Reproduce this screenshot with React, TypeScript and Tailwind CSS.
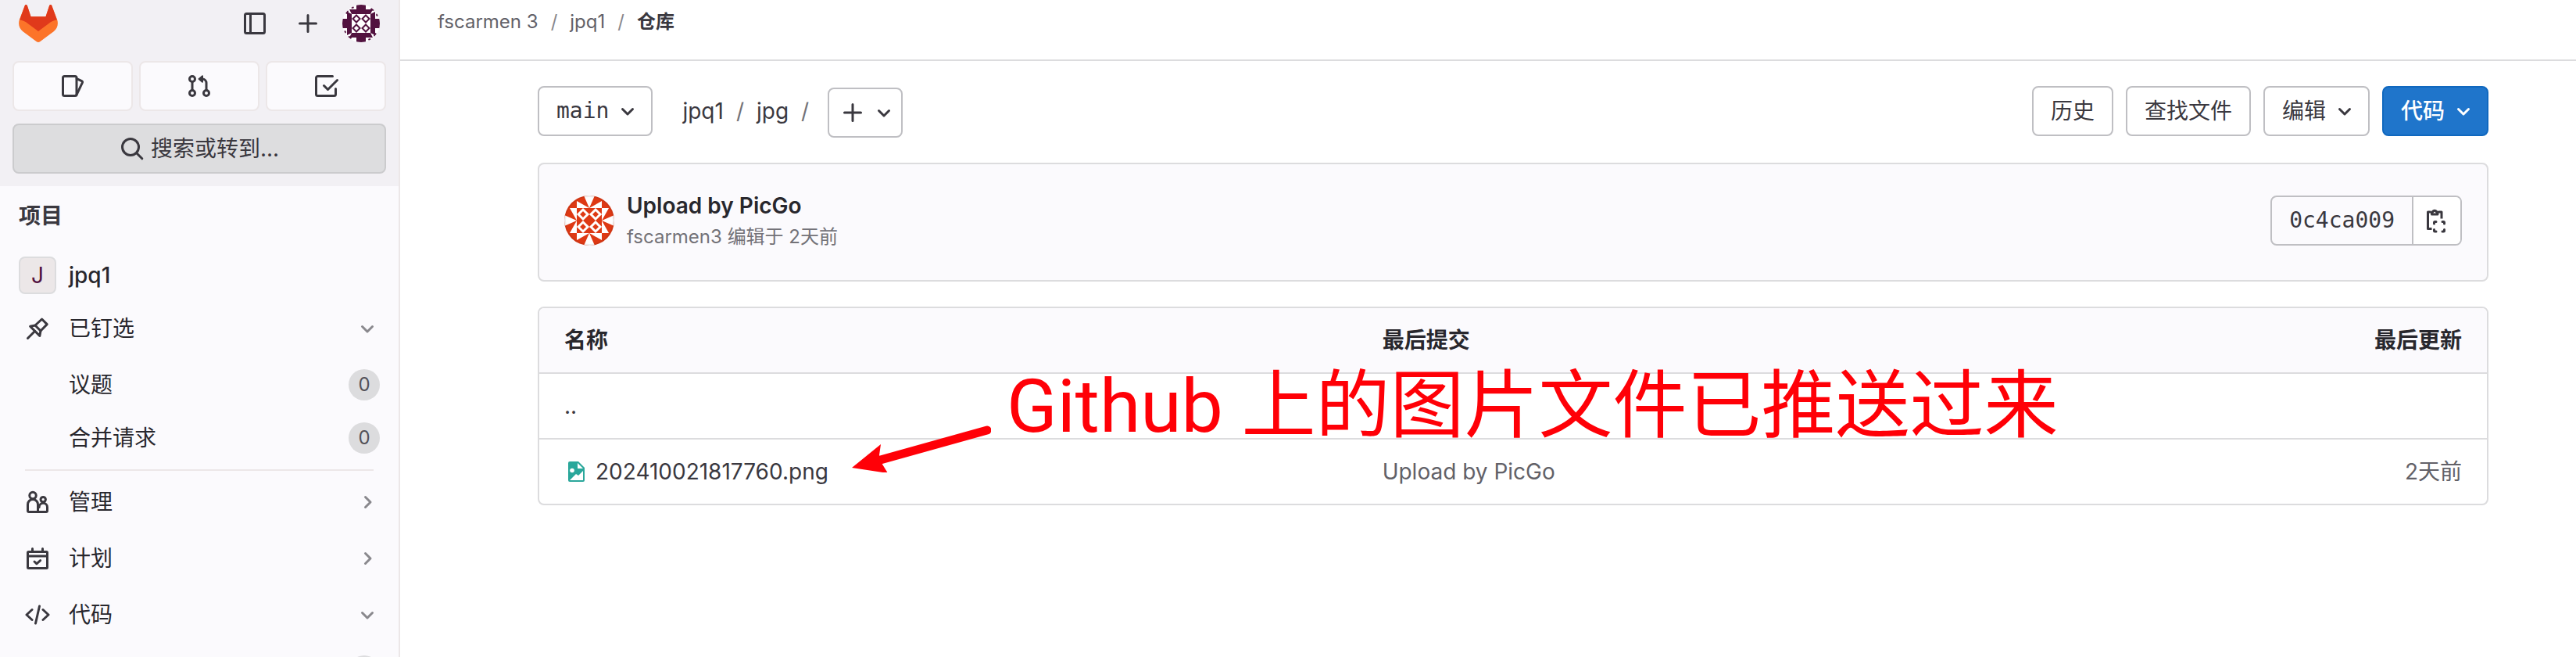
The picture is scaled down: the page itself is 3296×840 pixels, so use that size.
import type { ReactNode } from "react";

type IconProps = {
  children: ReactNode;
  className?: string;
};

const Icon = ({ children, className = "" }: IconProps) => (
  <svg
    viewBox="0 0 16 16"
    fill="none"
    stroke="currentColor"
    strokeWidth="1.5"
    strokeLinecap="round"
    strokeLinejoin="round"
    aria-hidden="true"
    className={`size-8 shrink-0 ${className}`}
  >
    {children}
  </svg>
);

const ChevronDown = ({ className = "" }: { className?: string }) => (
  <Icon className={className}>
    <path d="M4.75 6.75 8 10l3.25-3.25" />
  </Icon>
);

const ChevronRight = ({ className = "" }: { className?: string }) => (
  <Icon className={className}>
    <path d="M6.75 4.75 10 8l-3.25 3.25" />
  </Icon>
);

const PlusIcon = () => (
  <Icon>
    <path d="M8 2.75v10.5M2.75 8h10.5" />
  </Icon>
);

const Logo = () => (
  <svg viewBox="0 0 50 48" className="h-12 w-[50px]" aria-hidden="true">
    <path
      d="M49.1 19 42.2 1c-.4-1.3-2.5-1.3-3 0L34.5 15.3H15.5L10.8 1c-.5-1.3-2.6-1.3-3 0L.9 19C-1 24.5.5 30.5 5.3 34.2L22.8 47.2c1.3 1 3.1 1 4.4 0L44.7 34.2C49.5 30.5 51 24.5 49.1 19Z"
      fill="#fc7429"
    />
    <path
      d="M1.2 19.2 7.8 1c.4-1.3 2.5-1.3 3 0L15.5 15.3h19L39.2 1c.5-1.3 2.6-1.3 3 0l6.6 18.2c-3.8.8-7.3 2.4-10.3 4.7L25 34 11.5 23.9c-3-2.3-6.5-3.9-10.3-4.7Z"
      fill="#e0391b"
    />
  </svg>
);

const UserAvatar = () => (
  <svg viewBox="0 0 48 48" className="size-12" aria-hidden="true">
    <clipPath id="user-avatar">
      <circle cx="24" cy="24" r="24" />
    </clipPath>
    <g clipPath="url(#user-avatar)">
      <rect width="48" height="48" fill="#fff" />
      {[0, 90, 180, 270].map((angle) => (
        <g key={angle} transform={`rotate(${angle} 24 24)`} fill="#52123f">
          <path d="M18 0h12v6h9l-3 6H12L9 6h9Z" />
          <path d="m4 11 3-4 1 2-2 3ZM11 4l3-2 1 2-2 1Z" />
        </g>
      ))}
      <rect x="12" y="12" width="24" height="24" fill="#fff" />
      {[18, 30].map((cx) =>
        [18, 30].map((cy) => (
          <path
            key={`${cx}-${cy}`}
            d={`M${cx} ${cy - 4.5}l4.5 4.5-4.5 4.5-4.5-4.5Z`}
            fill="#fff"
            stroke="#52123f"
            strokeWidth="2"
          />
        ))
      )}
    </g>
  </svg>
);

const CommitAvatar = () => (
  <svg viewBox="0 0 64 64" className="size-16 shrink-0" aria-hidden="true">
    <clipPath id="commit-avatar">
      <circle cx="32" cy="32" r="32" />
    </clipPath>
    <g clipPath="url(#commit-avatar)">
      <rect width="64" height="64" fill="#de3914" />
      {[0, 90, 180, 270].map((angle) => (
        <g key={angle} transform={`rotate(${angle} 32 32)`} fill="#fff">
          <path d="M32 16 25 0h14Z" />
          <path d="M32 16H16V7Z" />
          <path d="M32 16h16V7Z" />
        </g>
      ))}
      <rect x="16" y="16" width="32" height="32" fill="#de3914" />
      {[24, 40].map((cx) =>
        [24, 40].map((cy) => (
          <path
            key={`${cx}-${cy}`}
            d={`M${cx} ${cy - 6}l6 6-6 6-6-6Z`}
            fill="#de3914"
            stroke="#fff"
            strokeWidth="3"
          />
        ))
      )}
      <circle cx="32" cy="32" r="31" fill="none" stroke="#1f1e24" strokeOpacity=".08" strokeWidth="2" />
    </g>
  </svg>
);

const ImageFileIcon = () => (
  <svg viewBox="0 0 32 32" className="size-8 shrink-0" aria-hidden="true">
    <path d="M7 3h11l8 8v16a2 2 0 0 1-2 2H7a2 2 0 0 1-2-2V5a2 2 0 0 1 2-2Z" fill="#2aa79b" />
    <path d="M17 5v7h7Z" fill="#fff" />
    <circle cx="10" cy="14.5" r="2.8" fill="#fff" />
    <path d="M7 27 15 19l3 2 6-6v12Z" fill="#fff" />
  </svg>
);

const shortcutClass =
  "flex h-16 items-center justify-center rounded-lg border-2 border-[#ece7e8] bg-[#fbfafd]";

const buttonClass =
  "flex h-16 items-center rounded-lg border-2 border-[#bfbfc3] bg-white text-[#3a383f]";

type MenuItemProps = {
  icon: ReactNode;
  label: string;
  open?: boolean;
};

const MenuItem = ({ icon, label, open = false }: MenuItemProps) => (
  <button type="button" className="flex h-[72px] w-full items-center pr-6 pl-8 text-left">
    <span className="text-[#3a383f]">{icon}</span>
    <span className="ml-6 flex-1">{label}</span>
    {open ? (
      <ChevronDown className="text-[#89888d]" />
    ) : (
      <ChevronRight className="text-[#89888d]" />
    )}
  </button>
);

const PinnedItem = ({ label, count }: { label?: string; count?: number }) => (
  <a href="#" className="flex h-[68px] items-center pr-6 pl-[88px]">
    <span className="flex-1">{label}</span>
    <span className="flex size-10 items-center justify-center rounded-full bg-[#dcdcde] text-2xl text-[#535158]">
      {count}
    </span>
  </a>
);

const Sidebar = () => (
  <aside className="w-[512px] shrink-0 border-r-2 border-[#ece7e8] bg-[#fbfafd] text-[#28272d]">
    <div className="bg-[#f2f0f4] px-4 pt-1.5 pb-4">
      <div className="flex items-center px-2 text-[#3a383f]">
        <a href="#" aria-label="GitLab">
          <Logo />
        </a>
        <button type="button" aria-label="Toggle sidebar" className="ml-auto">
          <Icon>
            <rect x="1.75" y="1.75" width="12.5" height="12.5" rx="1" />
            <path d="M5.25 2v12" />
          </Icon>
        </button>
        <button type="button" aria-label="New" className="mr-7 ml-9">
          <PlusIcon />
        </button>
        <button type="button" aria-label="User menu">
          <UserAvatar />
        </button>
      </div>

      <div className="mt-6 grid grid-cols-3 gap-2 text-[#3a383f]">
        <button type="button" aria-label="Issues" className={shortcutClass}>
          <Icon>
            <rect x="1.75" y="1.75" width="8.75" height="12.5" rx="1" />
            <path d="m10.6 3.3 3.2 1.5c.4.2.6.6.4 1l-3.8 8" />
          </Icon>
        </button>
        <button type="button" aria-label="Merge requests" className={shortcutClass}>
          <Icon>
            <circle cx="3.5" cy="3.5" r="1.75" />
            <circle cx="3.5" cy="12.5" r="1.75" />
            <circle cx="12.5" cy="12.5" r="1.75" />
            <path d="M3.5 5.25v5.5M12.5 10.75V6A2.5 2.5 0 0 0 10 3.5H9" />
            <path d="M7.8 3.5 10 1.6v3.8Z" fill="currentColor" strokeWidth="1" />
          </Icon>
        </button>
        <button type="button" aria-label="To-do list" className={shortcutClass}>
          <Icon>
            <path d="M12.25 1.75H2.75a1 1 0 0 0-1 1v10.5a1 1 0 0 0 1 1h10.5a1 1 0 0 0 1-1V9.75" />
            <path d="M6.75 7.75 9.25 10.25 15.25 4.25" />
          </Icon>
        </button>
      </div>

      <button
        type="button"
        className="mt-4 flex h-16 w-full items-center justify-center gap-2 rounded-lg border-2 border-[#cbcbcd] bg-[#dddddf] text-[#3a383f]"
      >
        <Icon>
          <circle cx="7" cy="7" r="5.25" />
          <path d="m11 11 3.4 3.4" />
        </Icon>
        搜索或转到...
      </button>
    </div>

    <h2 className="px-6 pt-5 leading-9 font-bold text-[#3a383f]">项目</h2>
    <a href="#" className="mt-7 flex h-[60px] items-center gap-4 px-6 font-medium">
      <span className="flex size-12 items-center justify-center rounded-lg border-2 border-[#dcdcde] bg-[#ece7e8] font-normal text-[#52123f]">
        J
      </span>
      jpq1
    </a>

    <nav className="mt-0.5">
      <MenuItem
        label="已钉选"
        open
        icon={
          <Icon>
            <path d="m1.75 14.25 4.5-4.5" />
            <path d="M3.3 6.6 6.5 6l4.3-4 3.3 3.3L10 9.5l-.6 3.2Z" />
            <path d="M6.5 6 10 9.5" />
          </Icon>
        }
      />
      <div className="pt-0.5">
        <PinnedItem label="议题" count={0} />
        <PinnedItem label="合并请求" count={0} />
      </div>
      <hr className="mx-8 mt-1.5 mb-1 border-t-2 border-[#ece7e8]" />
      <MenuItem
        label="管理"
        icon={
          <Icon>
            <circle cx="5" cy="3.75" r="2.1" />
            <path d="M1.75 13.5V9.5a3.25 3.25 0 0 1 6.5 0v4.75H2.5a.75.75 0 0 1-.75-.75Z" />
            <circle cx="11.6" cy="6.3" r="1.6" />
            <path d="M8.5 14.25h5a.75.75 0 0 0 .75-.75v-2.25a2.6 2.6 0 0 0-5.2 0" />
          </Icon>
        }
      />
      <MenuItem
        label="计划"
        icon={
          <Icon>
            <rect x="1.75" y="3.75" width="12.5" height="10.5" rx=".5" />
            <path d="M4.75 1.75v2M11.25 1.75v2M2 6.5h12M6 10l1.4 1.4L9.8 9.3" />
          </Icon>
        }
      />
      <MenuItem
        label="代码"
        open
        icon={
          <Icon>
            <path d="M4.5 4.75 1 8l3.5 3.25M11.5 4.75 15 8l-3.5 3.25M9.25 2.5l-2.5 11" />
          </Icon>
        }
      />
      <div className="pt-0.5">
        <PinnedItem />
      </div>
    </nav>
  </aside>
);

const Annotation = () => (
  <>
    <svg
      viewBox="0 0 180 60"
      className="pointer-events-none absolute top-[152px] left-[400px] h-[60px] w-[180px]"
      aria-hidden="true"
    >
      <path d="M35 45 175 6" stroke="#ff0007" strokeWidth="11" strokeLinecap="round" />
      <path d="M2 54 39 24l-2 14 3 10 8 13Z" fill="#ff0007" />
    </svg>
    <p className="pointer-events-none absolute top-16 left-[600px] font-[Roboto,'Noto_Sans_CJK_SC',sans-serif] text-[95px] leading-[128px] whitespace-nowrap text-[#ff0007]">
      Github 上的图片文件已推送过来
    </p>
  </>
);

const App = () => {
  return (
    <div className="flex h-screen overflow-hidden bg-white font-[Inter,'Noto_Sans_CJK_SC',sans-serif] text-[28px] leading-10">
      <Sidebar />

      <div className="min-w-0 flex-1">
        <header className="h-[78px] border-b-2 border-[#dcdcde] px-12 pt-2.5">
          <nav className="flex items-center gap-4 text-2xl leading-9 text-[#626168]">
            <a href="#">fscarmen 3</a>
            <span className="text-[#89888d]">/</span>
            <a href="#">jpq1</a>
            <span className="text-[#89888d]">/</span>
            <a href="#" className="font-semibold text-[#3a383f]">
              仓库
            </a>
          </nav>
        </header>

        <main className="pt-8 pr-28 pl-44">
          <div className="flex items-start justify-between">
            <div className="flex items-start">
              <button
                type="button"
                className={`${buttonClass} gap-2 pr-3.5 pl-[22px] font-['DejaVu_Sans_Mono',monospace]`}
              >
                main
                <ChevronDown />
              </button>
              <nav className="ml-[38px] flex h-16 items-center gap-4 text-[#3a383f]">
                <a href="#">jpq1</a>
                <span className="text-[#737278]">/</span>
                <a href="#">jpg</a>
                <span className="text-[#737278]">/</span>
              </nav>
              <button
                type="button"
                aria-label="Add to tree"
                className={`${buttonClass} mt-0.5 ml-6 gap-2 pr-1.5 pl-3.5`}
              >
                <PlusIcon />
                <ChevronDown />
              </button>
            </div>

            <div className="flex gap-4">
              <button type="button" className={`${buttonClass} px-[22px]`}>
                历史
              </button>
              <button type="button" className={`${buttonClass} px-[22px]`}>
                查找文件
              </button>
              <button type="button" className={`${buttonClass} gap-2 pr-3.5 pl-[22px]`}>
                编辑
                <ChevronDown />
              </button>
              <button
                type="button"
                className="flex h-16 items-center gap-2 rounded-lg border-2 border-[#1068bf] bg-[#1f75cb] pr-3.5 pl-[22px] font-medium text-white"
              >
                代码
                <ChevronDown />
              </button>
            </div>
          </div>

          <section className="mt-8 flex h-[152px] items-center rounded-lg border-2 border-[#dcdcde] bg-[#fbfafd] px-8 pb-1">
            <CommitAvatar />
            <div className="ml-4 flex-1 pt-0.5">
              <a href="#" className="block font-semibold text-[#28272d]">
                Upload by PicGo
              </a>
              <p className="text-2xl leading-10 text-[#737278]">
                <a href="#">fscarmen3</a> 编辑于 2天前
              </p>
            </div>
            <div className="flex h-16 rounded-lg border-2 border-[#bfbfc3] text-[#3a383f]">
              <span className="flex items-center px-[22px] font-['DejaVu_Sans_Mono',monospace]">
                0c4ca009
              </span>
              <button
                type="button"
                aria-label="Copy commit SHA"
                className="flex items-center rounded-r-md border-l-2 border-[#bfbfc3] bg-white px-3.5"
              >
                <Icon>
                  <path d="M4.75 13.25H2.25V2.5H4M9 2.5h2V6.75" strokeLinecap="butt" />
                  <path d="M4.75 4V2.5h.6a1.25 1.25 0 0 1 2.4 0h.7V4Z" />
                  <path d="M6.25 10V9.25a.5.5 0 0 1 .5-.5h.75M11.5 8.75h.75a.5.5 0 0 1 .5.5V10M12.75 13.75v.75a.5.5 0 0 1-.5.5h-.75M7.5 15h-.75a.5.5 0 0 1-.5-.5v-.75" />
                </Icon>
              </button>
            </div>
          </section>

          <div className="relative mt-8">
            <div className="overflow-hidden rounded-lg border-2 border-[#dcdcde]">
              <table className="w-full table-fixed border-separate border-spacing-0 text-left">
                <thead>
                  <tr className="h-[84px] bg-[#fbfafd] text-[#28272d]">
                    <th className="w-[42%] border-b-2 border-[#dcdcde] px-8 font-semibold">名称</th>
                    <th className="border-b-2 border-[#dcdcde] px-8 font-semibold">最后提交</th>
                    <th className="w-[16%] border-b-2 border-[#dcdcde] px-8 text-right font-semibold">
                      最后更新
                    </th>
                  </tr>
                </thead>
                <tbody className="text-[#626168]">
                  <tr className="h-[84px]">
                    <td colSpan={3} className="border-b-2 border-[#dcdcde] px-8 text-[#3a383f]">
                      <a href="#">..</a>
                    </td>
                  </tr>
                  <tr className="h-[82px]">
                    <td className="px-8 text-[#3a383f]">
                      <a href="#" className="flex items-center gap-2">
                        <ImageFileIcon />
                        202410021817760.png
                      </a>
                    </td>
                    <td className="px-8">
                      <a href="#">Upload by PicGo</a>
                    </td>
                    <td className="px-8 text-right">2天前</td>
                  </tr>
                </tbody>
              </table>
            </div>
            <Annotation />
          </div>
        </main>
      </div>
    </div>
  );
};

export default App;
